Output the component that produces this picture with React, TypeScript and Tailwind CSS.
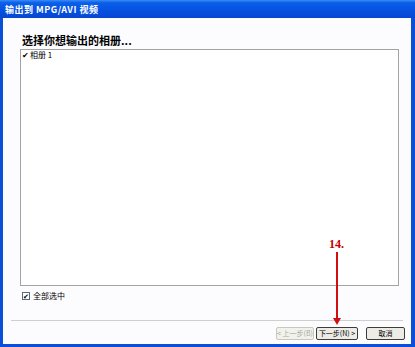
import React from "react";

const cjk = { fontFamily: '"Noto Sans CJK SC", "Liberation Sans", sans-serif' };

export default function App() {
  return (
    <div className="w-[415px] h-[347px] bg-[#0831d9] flex flex-col" style={cjk}>
      <div className="h-[18px] flex items-center px-[5px] bg-[linear-gradient(to_bottom,#3a8cf6_0%,#0a5fe8_15%,#0650e0_60%,#0847d0_100%)]">
        <span className="text-white text-[9px] font-bold leading-none tracking-[0.5px]">输出到 MPG/AVI 视频</span>
      </div>
      <div className="flex-1 flex pl-[3px] pr-[4px] pb-[3px] bg-[#0a4fd8]">
        <div className="flex-1 bg-[#fcfcfe] flex flex-col">
          <div className="pl-[19px] pt-[17px] pr-[12px] flex flex-col">
            <div className="text-[11px] font-bold leading-none text-black h-[14px]">选择你想输出的相册...</div>
            <div className="ml-[-2px] h-[237px] border border-[#a3a3a3] bg-white">
              <div className="flex items-center gap-[1px] pl-[1px] pt-[1px] text-[8px] leading-none text-black">
                <span className="text-[8px] leading-none">✔</span>
                <span>相册 1</span>
              </div>
            </div>
            <div className="flex items-center gap-[3px] mt-[6px] text-[8px] leading-none text-black">
              <span className="w-[8px] h-[8px] border border-[#5a6a80] bg-white flex items-center justify-center text-[7px] leading-none">✔</span>
              <span>全部选中</span>
            </div>
          </div>
          <div className="mt-[20px] mx-[8px] h-[1px] bg-[#cfcfcf]" />
          <div className="mt-[6px] flex justify-end pr-[6px] gap-[2px] relative">
            <div className="absolute left-[326px] top-[-89px] text-[#c00000] font-bold text-[12px] leading-none" style={{ fontFamily: '"Liberation Serif", serif' }}>14.</div>
            <div className="absolute left-[333px] top-[-75px] w-[1.5px] h-[68px] bg-[#d01010]" />
            <div className="absolute left-[330px] top-[-9px] w-0 h-0 border-l-[4px] border-r-[4px] border-t-[7px] border-l-transparent border-r-transparent border-t-[#d01010]" />
            <button className="w-[38px] h-[13px] border border-[#c8c8c0] bg-[#f2f2ec] text-[#a8a8a0] text-[7px] leading-none rounded-[2px]">&lt; 上一步(B)</button>
            <button className="w-[42px] h-[13px] border border-[#3c3c3c] bg-[#ecebe5] text-black text-[7px] leading-none rounded-[2px]">下一步(N) &gt;</button>
            <button className="ml-[6px] w-[39px] h-[13px] border border-[#3c3c3c] bg-[#ecebe5] text-black text-[7px] leading-none rounded-[2px]">取消</button>
          </div>
        </div>
      </div>
    </div>
  );
}
